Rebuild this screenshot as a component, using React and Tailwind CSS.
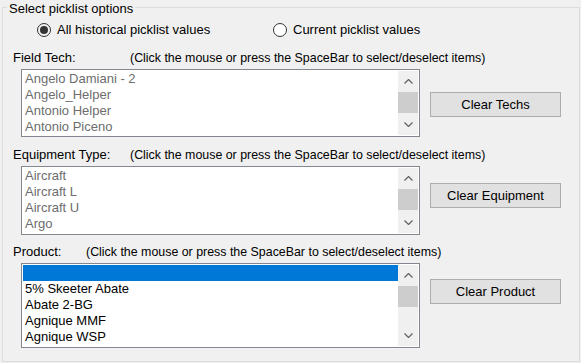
import React from "react";

const techs = ["Angelo Damiani - 2", "Angelo_Helper", "Antonio Helper", "Antonio Piceno"];
const equipment = ["Aircraft", "Aircraft L", "Aircraft U", "Argo"];
const products = ["", "5% Skeeter Abate", "Abate 2-BG", "Agnique MMF", "Agnique WSP"];

const Chevron = ({ down }) => (
  <svg width="9" height="5" viewBox="0 0 9 5" className={down ? "rotate-180" : ""}>
    <path d="M0.5 4.5 L4.5 0.5 L8.5 4.5" fill="none" stroke="#606060" strokeWidth="1.2" />
  </svg>
);

const ScrollBar = () => (
  <div className="w-[20px] bg-[#f0f0f0] flex flex-col">
    <div className="h-[21px] flex items-center justify-center">
      <Chevron />
    </div>
    <div className="h-[21px] bg-[#cdcdcd]" />
    <div className="flex-1" />
    <div className="h-[21px] flex items-center justify-center">
      <Chevron down />
    </div>
  </div>
);

const ListBox = ({ items, height, dim, selectFirst }) => (
  <div className={`w-[399px] ${height} border border-[#828790] bg-white p-[1px] flex`}>
    <div className="flex-1 overflow-hidden">
      {items.map((item, i) => (
        <div
          key={i}
          className={`h-[16px] leading-[16px] pl-[2px] whitespace-nowrap ${
            selectFirst && i === 0 ? "bg-[#0078d7] text-white" : dim ? "text-[#6d6d6d]" : "text-black"
          }`}
        >
          {item}
        </div>
      ))}
    </div>
    <ScrollBar />
  </div>
);

const SectionLabel = ({ label, hintX, className }) => (
  <div className={`h-[16px] flex items-center pl-[10px] ${className}`}>
    <span className={hintX}>{label}</span>
    <span className="text-[12.4px] whitespace-nowrap">
      (Click the mouse or press the SpaceBar to select/deselect items)
    </span>
  </div>
);

const ClearButton = ({ children, className }) => (
  <button className={`ml-[10px] w-[131px] h-[25px] border border-[#adadad] bg-[#e1e1e1] text-black ${className}`}>
    {children}
  </button>
);

export default function App() {
  return (
    <div
      className="w-[581px] h-[363px] bg-[#f0f0f0] px-[2px] text-[13px] text-black overflow-hidden"
      style={{ fontFamily: '"Liberation Sans", Arial, sans-serif' }}
    >
      <fieldset className="w-[578px] h-[362px] border border-[#dcdcdc]">
        <legend className="ml-[4px] px-[2px] leading-[15px]">
          <span className="relative top-[1px]">Select picklist options</span>
        </legend>

        {/* Radio options */}
        <div className="mt-[7px] h-[16px] flex items-center pl-[34px]">
          <div className="w-[236px] flex items-center">
            <span className="w-[14px] h-[14px] rounded-full border border-[#333] flex items-center justify-center">
              <span className="w-[8px] h-[8px] rounded-full bg-[#333]" />
            </span>
            <span className="ml-[6px]">All historical picklist values</span>
          </div>
          <div className="flex items-center">
            <span className="w-[14px] h-[14px] rounded-full border border-[#333] bg-white" />
            <span className="ml-[6px]">Current picklist values</span>
          </div>
        </div>

        {/* Field Tech */}
        <SectionLabel label="Field Tech:" hintX="w-[117px]" className="mt-[12px]" />
        <div className="mt-[3px] flex items-start pl-[18px]">
          <ListBox items={techs} height="h-[68px]" dim />
          <ClearButton className="mt-[23px]">Clear Techs</ClearButton>
        </div>

        {/* Equipment Type */}
        <SectionLabel label="Equipment Type:" hintX="w-[117px]" className="mt-[10px]" />
        <div className="mt-[3px] flex items-start pl-[18px]">
          <ListBox items={equipment} height="h-[69px]" dim />
          <ClearButton className="mt-[17px]">Clear Equipment</ClearButton>
        </div>

        {/* Product */}
        <SectionLabel label="Product:" hintX="w-[73px]" className="mt-[9px]" />
        <div className="mt-[3px] flex items-start pl-[18px]">
          <ListBox items={products} height="h-[85px]" selectFirst />
          <ClearButton className="mt-[16px]">Clear Product</ClearButton>
        </div>
      </fieldset>
    </div>
  );
}
